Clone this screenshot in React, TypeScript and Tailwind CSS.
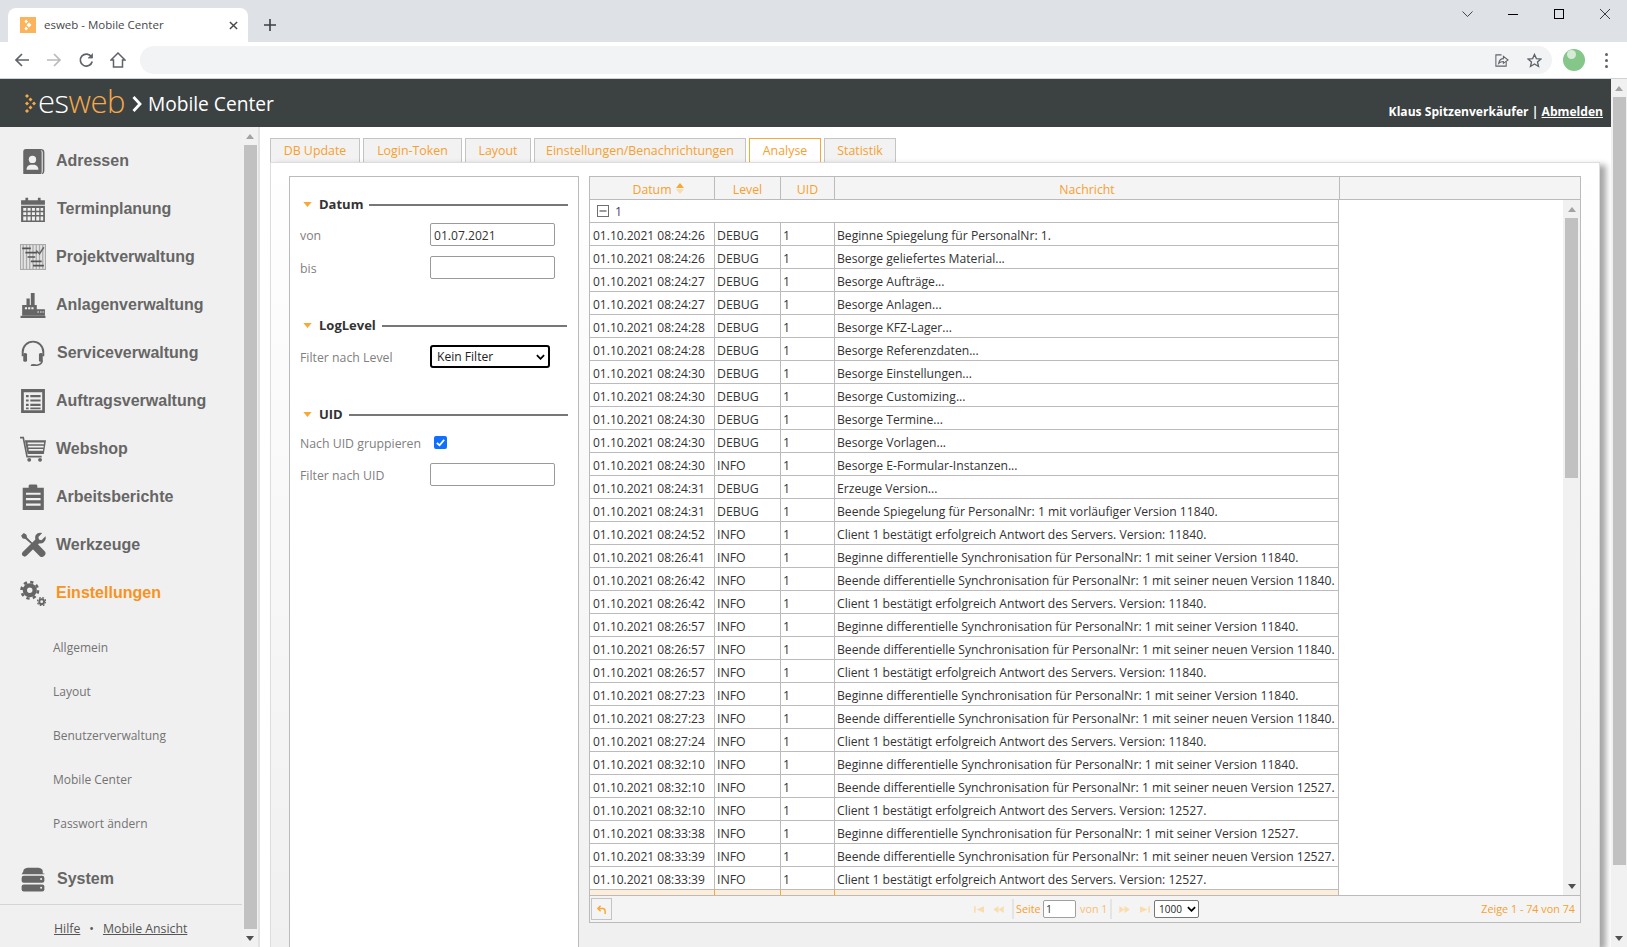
import React from "react";

const rows: [string, string, string][] = [
  ["01.10.2021 08:24:26", "DEBUG", "Beginne Spiegelung für PersonalNr: 1."],
  ["01.10.2021 08:24:26", "DEBUG", "Besorge geliefertes Material..."],
  ["01.10.2021 08:24:27", "DEBUG", "Besorge Aufträge..."],
  ["01.10.2021 08:24:27", "DEBUG", "Besorge Anlagen..."],
  ["01.10.2021 08:24:28", "DEBUG", "Besorge KFZ-Lager..."],
  ["01.10.2021 08:24:28", "DEBUG", "Besorge Referenzdaten..."],
  ["01.10.2021 08:24:30", "DEBUG", "Besorge Einstellungen..."],
  ["01.10.2021 08:24:30", "DEBUG", "Besorge Customizing..."],
  ["01.10.2021 08:24:30", "DEBUG", "Besorge Termine..."],
  ["01.10.2021 08:24:30", "DEBUG", "Besorge Vorlagen..."],
  ["01.10.2021 08:24:30", "INFO", "Besorge E-Formular-Instanzen..."],
  ["01.10.2021 08:24:31", "DEBUG", "Erzeuge Version..."],
  ["01.10.2021 08:24:31", "DEBUG", "Beende Spiegelung für PersonalNr: 1 mit vorläufiger Version 11840."],
  ["01.10.2021 08:24:52", "INFO", "Client 1 bestätigt erfolgreich Antwort des Servers. Version: 11840."],
  ["01.10.2021 08:26:41", "INFO", "Beginne differentielle Synchronisation für PersonalNr: 1 mit seiner Version 11840."],
  ["01.10.2021 08:26:42", "INFO", "Beende differentielle Synchronisation für PersonalNr: 1 mit seiner neuen Version 11840."],
  ["01.10.2021 08:26:42", "INFO", "Client 1 bestätigt erfolgreich Antwort des Servers. Version: 11840."],
  ["01.10.2021 08:26:57", "INFO", "Beginne differentielle Synchronisation für PersonalNr: 1 mit seiner Version 11840."],
  ["01.10.2021 08:26:57", "INFO", "Beende differentielle Synchronisation für PersonalNr: 1 mit seiner neuen Version 11840."],
  ["01.10.2021 08:26:57", "INFO", "Client 1 bestätigt erfolgreich Antwort des Servers. Version: 11840."],
  ["01.10.2021 08:27:23", "INFO", "Beginne differentielle Synchronisation für PersonalNr: 1 mit seiner Version 11840."],
  ["01.10.2021 08:27:23", "INFO", "Beende differentielle Synchronisation für PersonalNr: 1 mit seiner neuen Version 11840."],
  ["01.10.2021 08:27:24", "INFO", "Client 1 bestätigt erfolgreich Antwort des Servers. Version: 11840."],
  ["01.10.2021 08:32:10", "INFO", "Beginne differentielle Synchronisation für PersonalNr: 1 mit seiner Version 11840."],
  ["01.10.2021 08:32:10", "INFO", "Beende differentielle Synchronisation für PersonalNr: 1 mit seiner neuen Version 12527."],
  ["01.10.2021 08:32:10", "INFO", "Client 1 bestätigt erfolgreich Antwort des Servers. Version: 12527."],
  ["01.10.2021 08:33:38", "INFO", "Beginne differentielle Synchronisation für PersonalNr: 1 mit seiner Version 12527."],
  ["01.10.2021 08:33:39", "INFO", "Beende differentielle Synchronisation für PersonalNr: 1 mit seiner neuen Version 12527."],
  ["01.10.2021 08:33:39", "INFO", "Client 1 bestätigt erfolgreich Antwort des Servers. Version: 12527."],
];

const tabs = [
  { label: "DB Update", w: "w-[90px]" },
  { label: "Login-Token", w: "w-[99px]" },
  { label: "Layout", w: "w-[66px]" },
  { label: "Einstellungen/Benachrichtungen", w: "w-[212px]" },
  { label: "Analyse", w: "w-[72px]", active: true },
  { label: "Statistik", w: "w-[72px]" },
];

const G = "#666666";

function Ico({ children, view = "0 0 24 24" }: { children: React.ReactNode; view?: string }) {
  return (
    <svg viewBox={view} className="w-[26px] h-[26px]" fill={G}>
      {children}
    </svg>
  );
}

const icons: Record<string, React.ReactNode> = {
  Adressen: (
    <Ico>
      <path d="M3 3.5 Q3 1 5.5 1 H19 Q22.5 1 22.5 4 V21 Q22.5 24.5 19 24.5 H19 Q21 24 21 21 V4 Q21 2 19 2 Q20 3 20 4 V22 Q20 25 17 25 H5 Q3 25 3 23 Z" />
      <circle cx="11.5" cy="10.5" r="3.4" fill="#f0f0f0" />
      <path d="M6 20 Q6 16.5 9.5 15.5 L13.5 15.5 Q17 16.5 17 20 Z" fill="#f0f0f0" />
    </Ico>
  ),
  Terminplanung: (
    <Ico>
      <path d="M1 4 H5 V1.5 H7.5 V4 H16.5 V1.5 H19 V4 H23 V8 H1 Z" />
      <path fillRule="evenodd" d="M1 9 H23 V25 H1 Z M3 11 V13.5 H5.8 V11 Z M7 11 V13.5 H9.8 V11 Z M11 11 V13.5 H13.8 V11 Z M15 11 V13.5 H17.8 V11 Z M19 11 V13.5 H21.4 V11 Z M3 15 V17.5 H5.8 V15 Z M7 15 V17.5 H9.8 V15 Z M11 15 V17.5 H13.8 V15 Z M15 15 V17.5 H17.8 V15 Z M19 15 V17.5 H21.4 V15 Z M3 19 V22.5 H5.8 V19 Z M7 19 V22.5 H9.8 V19 Z M11 19 V22.5 H13.8 V19 Z M15 19 V22.5 H17.8 V19 Z M19 19 V22.5 H21.4 V19 Z" />
    </Ico>
  ),
  Projektverwaltung: (
    <Ico>
      <rect x="0.5" y="0.5" width="23" height="23" fill="#e4e4e4" stroke="#aaa" />
      <path d="M3 1 V23 M6 1 V23 M9 1 V23 M12 1 V23 M15 1 V23 M18 1 V23 M21 1 V23" stroke="#aaa" strokeWidth="1.2" />
      <path d="M2 4 H10 M5 8 H16 M7 12 H14 M10 16 H20 M12 20 H22" stroke="#555" strokeWidth="1.6" />
      <path d="M15 6 L18 9 L22 3" stroke="#666" strokeWidth="1.4" fill="none" />
    </Ico>
  ),
  Anlagenverwaltung: (
    <Ico>
      <path d="M6 6 H9 V12 H6 Z M10 1 H13.5 V12 H10 Z" />
      <path fillRule="evenodd" d="M2 12 H15.5 V16 H23 V22 H2 Z M4.5 14 V16 H6.5 V14 Z M7.5 14 V16 H9.5 V14 Z M10.5 14 V16 H12.5 V14 Z M16 18 V19 H17.5 V18 Z M18.5 18 V19 H20 V18 Z M20.8 18 V19 H22 V18 Z" />
      <rect x="0.5" y="22" width="23" height="2" />
    </Ico>
  ),
  Serviceverwaltung: (
    <Ico>
      <path d="M2.5 15 V11 A9.5 9.5 0 0 1 21.5 11 V15" fill="none" stroke={G} strokeWidth="1.8" />
      <rect x="3" y="12" width="3.5" height="8" rx="1.4" />
      <rect x="17.5" y="12" width="3.5" height="8" rx="1.4" />
      <path d="M20.5 19 Q20 23 14 23.5" fill="none" stroke={G} strokeWidth="1.5" />
      <ellipse cx="12.5" cy="23.5" rx="2.6" ry="1.3" />
    </Ico>
  ),
  Auftragsverwaltung: (
    <Ico>
      <path fillRule="evenodd" d="M1 1 H23 V23 H1 Z M3.5 4 V20.5 H20.5 V4 Z" />
      <path d="M5.5 6.5 H8 V8.5 H5.5 Z M9.5 6.5 H19 V8.5 H9.5 Z M5.5 10.5 H8 V12.5 H5.5 Z M9.5 10.5 H19 V12.5 H9.5 Z M5.5 14.5 H8 V16.5 H5.5 Z M9.5 14.5 H19 V16.5 H9.5 Z M5.5 18 H8 V19.5 H5.5 Z M9.5 18 H19 V19.5 H9.5 Z" />
    </Ico>
  ),
  Webshop: (
    <Ico>
      <path d="M0 1.5 H3 L6.5 19 H20" fill="none" stroke={G} strokeWidth="1.5" />
      <path fillRule="evenodd" d="M4.5 4 H24 L22 16.5 H7 Z M7 6 V7.5 H22.2 V6 Z M7.5 9 V10.5 H21.8 V9 Z M8 12 V13.5 H21.3 V12 Z" />
      <circle cx="8.5" cy="22" r="1.8" />
      <circle cx="18.5" cy="22" r="1.8" />
    </Ico>
  ),
  Arbeitsberichte: (
    <Ico>
      <path fillRule="evenodd" d="M2.5 3.5 H8 V1.5 Q8 0.5 9.5 0.5 H14.5 Q16 0.5 16 1.5 V3.5 H22 V24.5 H2.5 Z M5.5 8 V10 H19 V8 Z M5.5 13 V15 H19 V13 Z M5.5 18 V20 H19 V18 Z" />
    </Ico>
  ),
  Werkzeuge: (
    <Ico>
      <path d="M1 3.5 L3.5 1 L6 2.5 L6.5 5 L13 11.5 L15 9.8 L23 18 Q24.5 20 22.5 22 Q20.5 24 18.5 22.5 L10.5 14.5 L12 12.5 L5 6.5 L2.5 6 Z" />
      <path d="M23.5 4 L19.8 7.5 L17.5 7 L17 4.5 L20.5 1 Q16 0 14.2 3.5 Q13.8 5.5 14.2 7 L2.5 18.5 Q1 20.5 2.5 22 Q4.5 23.5 6 22 L17.5 10.5 Q20 11 22 9.5 Q24.5 7.5 23.5 4 Z" />
    </Ico>
  ),
  Einstellungen: (
    <Ico>
      <g fill="none" stroke={G}>
        <circle cx="9" cy="9.5" r="4.5" strokeWidth="4" />
        <circle cx="9" cy="9.5" r="7.6" strokeWidth="2.4" strokeDasharray="3 3" />
        <circle cx="20" cy="20" r="2.2" strokeWidth="1.8" />
        <circle cx="20" cy="20" r="3.8" strokeWidth="1.2" strokeDasharray="1.6 1.4" />
      </g>
    </Ico>
  ),
  System: (
    <Ico>
      <path d="M3 5 Q3 2 7 1.5 H17 Q21 2 21 5 V7 H1.5 H22.5 V7.5 H1.5 Z" />
      <rect x="1.5" y="9" width="21" height="6.5" rx="2" />
      <rect x="1.5" y="17" width="21" height="6.5" rx="2" />
      <circle cx="19.5" cy="12" r="0.9" fill="#f0f0f0" />
      <circle cx="19.5" cy="20" r="0.9" fill="#f0f0f0" />
    </Ico>
  ),
};

const navTop = [
  "Adressen",
  "Terminplanung",
  "Projektverwaltung",
  "Anlagenverwaltung",
  "Serviceverwaltung",
  "Auftragsverwaltung",
  "Webshop",
  "Arbeitsberichte",
  "Werkzeuge",
  "Einstellungen",
];
const subNav = ["Allgemein", "Layout", "Benutzerverwaltung", "Mobile Center", "Passwort ändern"];
const wideGap = ["Terminplanung", "Serviceverwaltung", "System"];

function NavItem({ name }: { name: string }) {
  const active = name === "Einstellungen";
  return (
    <div className={`h-[48px] flex items-center pl-[20px] ${wideGap.includes(name) ? "gap-[11px]" : "gap-[10px]"}`}>
      {icons[name]}
      <span
        className={`font-['Liberation_Sans',sans-serif] font-bold text-[16px] ${
          active ? "text-[#f7931e]" : "text-[#666666]"
        }`}
      >
        {name}
      </span>
    </div>
  );
}

function Tri({ up, color = "#666666" }: { up?: boolean; color?: string }) {
  return (
    <svg viewBox="0 0 10 6" className="w-[8px] h-[5px]" fill={color}>
      <path d={up ? "M5 0 L10 6 H0 Z" : "M0 0 H10 L5 6 Z"} />
    </svg>
  );
}

function Scroll({ thumb, narrow }: { thumb: string; narrow?: boolean }) {
  return (
    <div className={`h-full flex flex-col items-center ${narrow ? "w-[16px]" : "w-[17px]"} bg-[#f1f1f1]`}>
      <div className="h-[18px] shrink-0 flex items-center justify-center">
        <Tri up color="#a3a3a3" />
      </div>
      <div className="flex-1 w-[13px]">
        <div className={`bg-[#c1c1c1] w-[13px] ${thumb}`} />
      </div>
      <div className="h-[18px] shrink-0 flex items-center justify-center">
        <Tri color="#505050" />
      </div>
    </div>
  );
}

function Legend({ title, line }: { title: string; line: string }) {
  return (
    <div className="flex items-center h-[20px] pl-[13px]">
      <svg viewBox="0 0 10 6" className="w-[9px] h-[5px] mr-[7px]" fill="#f7a935">
        <path d="M0 0 H10 L5 6 Z" />
      </svg>
      <span className="pt-[2px] font-bold text-[13px] text-[#333333]">{title}</span>
      <div className={`h-[1.5px] bg-[#777777] ml-[6px] mt-[2px] ${line}`} />
    </div>
  );
}

function Field({ label, children }: { label: string; children: React.ReactNode }) {
  return (
    <div className="flex items-center h-[23px] pl-[10px]">
      <span className="w-[130px] pt-[3px] text-[12.3px] text-[#808080]">{label}</span>
      {children}
    </div>
  );
}

function TextBox({ value = "" }: { value?: string }) {
  return (
    <div className="w-[125px] h-[23px] border border-[#9a9a9a] rounded-[2px] bg-white pl-[3px] pt-[2px] text-[12.1px] leading-[20px] text-[#333333]">
      {value}
    </div>
  );
}

function PagerIcon({ d, w = "w-[10px]" }: { d: string; w?: string }) {
  return (
    <svg viewBox="0 0 12 8" className={`${w} h-[7px] shrink-0`} fill="#fbdcae">
      <path d={d} />
    </svg>
  );
}

export default function App() {
  return (
    <div className="w-[1627px] h-[947px] overflow-hidden flex flex-col bg-white font-['Open_Sans',sans-serif]">
      {/* browser tab strip */}
      <div className="h-[42px] shrink-0 bg-[#dee1e6] flex items-end relative">
        <div className="ml-[8px] w-[240px] h-[34px] bg-white rounded-t-[8px] flex items-center pl-[12px] pr-[10px]">
          <svg viewBox="0 0 16 16" className="w-[16px] h-[16px] shrink-0">
            <rect width="16" height="16" fill="#fbb45c" />
            <path d="M6 2.5 L8 4.5 L6 6.5 L4.5 4.5 Z M9 5.5 L11.5 8 L9 10.5 L6.5 8 Z M6 9.5 L8 11.5 L6 13.5 L4.5 11.5 Z" fill="#fff" />
          </svg>
          <span className="ml-[8px] flex-1 text-[11.5px] text-[#45484c]">esweb - Mobile Center</span>
          <svg viewBox="0 0 10 10" className="w-[9px] h-[9px]" stroke="#45484c" strokeWidth="1.6">
            <path d="M1 1 L9 9 M9 1 L1 9" />
          </svg>
        </div>
        <div className="ml-[16px] mb-[11px]">
          <svg viewBox="0 0 12 12" className="w-[12px] h-[12px]" stroke="#3c4043" strokeWidth="1.6">
            <path d="M6 0 V12 M0 6 H12" />
          </svg>
        </div>
        <div className="ml-auto self-start h-[28px] flex items-center">
          <div className="w-[46px] flex justify-center">
            <svg viewBox="0 0 11 6" className="w-[11px] h-[6px]" fill="none" stroke="#333" strokeWidth="0.9">
              <path d="M0.5 0.5 L5.5 5.5 L10.5 0.5" />
            </svg>
          </div>
          <div className="w-[46px] flex justify-center">
            <div className="w-[10px] h-px bg-black" />
          </div>
          <div className="w-[46px] flex justify-center">
            <div className="w-[10px] h-[10px] border border-black" />
          </div>
          <div className="w-[45px] flex justify-center">
            <svg viewBox="0 0 10 10" className="w-[10px] h-[10px]" stroke="#111" strokeWidth="0.8">
              <path d="M0 0 L10 10 M10 0 L0 10" />
            </svg>
          </div>
        </div>
      </div>

      {/* browser toolbar */}
      <div className="h-[37px] shrink-0 bg-white border-b border-[#cfd1d4] flex items-center">
        <div className="w-[140px] flex items-center pl-[14px] gap-[16px]">
          <svg viewBox="0 0 16 16" className="w-[16px] h-[16px]" fill="none" stroke="#5f6368" strokeWidth="1.7">
            <path d="M15 8 H2 M8 2 L2 8 L8 14" />
          </svg>
          <svg viewBox="0 0 16 16" className="w-[16px] h-[16px]" fill="none" stroke="#b8babd" strokeWidth="1.7">
            <path d="M1 8 H14 M8 2 L14 8 L8 14" />
          </svg>
          <svg viewBox="0 0 16 16" className="w-[16px] h-[16px]" fill="none" stroke="#5f6368" strokeWidth="1.7">
            <path d="M13.5 5 A6 6 0 1 0 14.2 9.5" />
            <path d="M14.5 1.5 V6 H10" fill="#5f6368" strokeWidth="0.8" />
          </svg>
          <svg viewBox="0 0 16 16" className="w-[16px] h-[16px]" fill="none" stroke="#5f6368" strokeWidth="1.5">
            <path d="M1 8 L8 1 L15 8 H12.5 V15 H3.5 V8 Z" />
          </svg>
        </div>
        <div className="w-[1412px] h-[28px] rounded-full bg-[#f1f3f4] flex items-center justify-end pr-[10px] gap-[18px]">
          <svg viewBox="0 0 16 16" className="w-[15px] h-[15px]" fill="none" stroke="#5f6368" strokeWidth="1.1">
            <path d="M8 2 H2 V14 H13 V9" />
            <path d="M5 11 Q6 6 10 6 V3.5 L15 7.5 L10 11 V9 Q7 9 5 11 Z" />
          </svg>
          <svg viewBox="0 0 16 16" className="w-[15px] h-[15px]" fill="none" stroke="#5f6368" strokeWidth="1.4">
            <path d="M8 1.5 L10 6 L14.8 6.4 L11.2 9.6 L12.3 14.4 L8 11.8 L3.7 14.4 L4.8 9.6 L1.2 6.4 L6 6 Z" />
          </svg>
        </div>
        <div className="ml-[11px] w-[22px] h-[22px] rounded-full bg-[#85c689] relative shrink-0">
          <div className="absolute left-[4px] top-[1px] w-[9px] h-[9px] rounded-full bg-[#d6ebd7]" />
        </div>
        <div className="ml-[20px] flex flex-col gap-[3px]">
          <div className="w-[3px] h-[3px] rounded-full bg-[#5f6368]" />
          <div className="w-[3px] h-[3px] rounded-full bg-[#5f6368]" />
          <div className="w-[3px] h-[3px] rounded-full bg-[#5f6368]" />
        </div>
      </div>

      {/* page */}
      <div className="flex-1 min-h-0 flex">
        <div className="w-[1611px] flex flex-col">
          <header className="h-[48px] shrink-0 bg-[#3c4142] flex pl-[25px] pr-[8px] text-white">
            <svg viewBox="0 0 11 19" className="w-[11px] h-[19px] mt-[15px] shrink-0" fill="#f5a94a">
              <path d="M2 0 L4 2 L2 4 L0 2 Z M2 15 L4 17 L2 19 L0 17 Z M2 7.5 L4 9.5 L2 11.5 L0 9.5 Z M5.5 3.5 L7.5 5.5 L5.5 7.5 L3.5 5.5 Z M5.5 11.5 L7.5 13.5 L5.5 15.5 L3.5 13.5 Z M9 7.5 L11 9.5 L9 11.5 L7 9.5 Z" />
            </svg>
            <div className="ml-[2px] h-[44px] flex items-center font-light text-[31px] leading-none tracking-[-0.5px]">
              <span className="text-white">es</span>
              <span className="text-[#f5a94a]">web</span>
            </div>
            <svg viewBox="0 0 10 16" className="w-[10px] h-[16px] ml-[7px] mt-[17px] shrink-0" fill="none" stroke="#fff" strokeWidth="2.8">
              <path d="M1.5 1 L8 8 L1.5 15" />
            </svg>
            <span className="ml-[6px] mt-[10px] text-[19.2px] leading-[30px] text-white">Mobile Center</span>
            <div className="ml-auto self-end mb-[6px] text-[12.1px] font-bold leading-[18px]">
              Klaus Spitzenverkäufer | <span className="underline">Abmelden</span>
            </div>
          </header>

          <div className="flex-1 min-h-0 flex">
            {/* sidebar */}
            <aside className="w-[260px] shrink-0 bg-[#f0f0f0] border-r-2 border-[#e2e2e2] flex">
              <div className="w-[242px] flex flex-col pt-[10px]">
                {navTop.map((n) => (
                  <NavItem key={n} name={n} />
                ))}
                <div className="flex flex-col pt-[9px] pb-[9px]">
                  {subNav.map((s) => (
                    <div key={s} className="h-[44px] flex items-center pl-[53px] text-[12px] text-[#737373]">
                      {s}
                    </div>
                  ))}
                </div>
                <NavItem name="System" />
                <div className="h-px bg-[#d4d4d4] mt-[1px] w-[242px]" />
                <div className="pl-[54px] pt-[15px] text-[12.3px] text-[#555555] flex items-center">
                  <span className="underline">Hilfe</span>
                  <span className="mx-[9px]">•</span>
                  <span className="underline">Mobile Ansicht</span>
                </div>
              </div>
              <Scroll thumb="h-[784px]" narrow />
            </aside>

            {/* content */}
            <main className="flex-1 min-w-0 pl-[10px] pr-[11px] pt-[11px] flex flex-col">
              <div className="flex h-[24px] shrink-0 gap-[3px]">
                {tabs.map((t) => (
                  <div
                    key={t.label}
                    className={`${t.w} flex items-center justify-center pt-[2px] border border-b-0 text-[12.4px] text-[#f7a02e] ${
                      t.active ? "bg-white border-[#f7a935]" : "bg-[#f2f2f2] border-[#c4c4c4]"
                    }`}
                  >
                    {t.label}
                  </div>
                ))}
              </div>
              <div className="flex-1 min-h-0 flex gap-[10px] border border-b-0 border-[#dddddd] bg-gradient-to-b from-white to-[#f0f0f0] pl-[18px] pr-[19px] pt-[13px] shadow-[6px_3px_6px_rgba(0,0,0,0.35)]">
                {/* filter box */}
                <div className="w-[290px] shrink-0 border border-[#bbbbbb] border-b-0 bg-white pt-[17px] pr-[10px]">
                  <Legend title="Datum" line="w-[199px]" />
                  <div className="mt-[9px]">
                    <Field label="von">
                      <TextBox value="01.07.2021" />
                    </Field>
                  </div>
                  <div className="mt-[10px]">
                    <Field label="bis">
                      <TextBox />
                    </Field>
                  </div>
                  <div className="mt-[36px]">
                    <Legend title="LogLevel" line="w-[185px]" />
                  </div>
                  <div className="mt-[10px]">
                    <Field label="Filter nach Level">
                      <div className="w-[120px] h-[23px] border-2 border-black rounded-[3px] bg-white flex items-center justify-between pl-[5px] pr-[3px] text-[12.1px] text-[#222222]">
                        <span className="pt-[2px]">Kein Filter</span>
                        <svg viewBox="0 0 10 6" className="w-[9px] h-[6px]" fill="none" stroke="#000" strokeWidth="2">
                          <path d="M1 1 L5 5 L9 1" />
                        </svg>
                      </div>
                    </Field>
                  </div>
                  <div className="mt-[36px]">
                    <Legend title="UID" line="w-[220px]" />
                  </div>
                  <div className="mt-[7px]">
                    <Field label="Nach UID gruppieren">
                      <div className="w-[13px] h-[13px] ml-[4px] rounded-[2px] bg-[#0f6fff] flex items-center justify-center">
                        <svg viewBox="0 0 12 12" className="w-[11px] h-[11px]" fill="none" stroke="#fff" strokeWidth="2">
                          <path d="M2 6.5 L5 9 L10 3" />
                        </svg>
                      </div>
                    </Field>
                  </div>
                  <div className="mt-[9px]">
                    <Field label="Filter nach UID">
                      <TextBox />
                    </Field>
                  </div>
                </div>

                {/* grid */}
                <div className="w-[992px] h-[747px] shrink-0 border border-[#bbbbbb] flex flex-col text-[12.3px] text-[#333333]">
                  <div className="h-[23px] shrink-0 bg-[#f4f4f4] border-b border-[#bbbbbb] grid grid-cols-[124px_66px_54px_505px_1fr] text-[#f7a02e]">
                    <div className="flex items-center justify-center gap-[4px] pl-[12px]">
                      <span className="pt-[4px]">Datum</span>
                      <div className="flex flex-col gap-px">
                        <Tri up color="#f7a935" />
                        <Tri color="#fbdcae" />
                      </div>
                    </div>
                    <div className="border-l border-[#bbbbbb] flex items-center justify-center pt-[4px]">Level</div>
                    <div className="border-l border-[#bbbbbb] flex items-center justify-center pt-[4px]">UID</div>
                    <div className="border-l border-[#bbbbbb] flex items-center justify-center pt-[4px]">Nachricht</div>
                    <div className="border-l border-[#bbbbbb]" />
                  </div>
                  <div className="flex-1 min-h-0 flex bg-white">
                    <div className="w-[749px] shrink-0 h-full overflow-hidden border-r border-[#bbbbbb]">
                      <div className="h-[23px] border-b border-[#bbbbbb] flex items-center pl-[7px] text-[#4a3a7a]">
                        <svg viewBox="0 0 12 12" className="w-[12px] h-[12px] mr-[6px]" fill="none" stroke="#707070">
                          <rect x="0.5" y="0.5" width="11" height="11" />
                          <path d="M2.5 6 H9.5" strokeWidth="1.4" />
                        </svg>
                        <span className="pt-[3px]">1</span>
                      </div>
                      {rows.map((r, i) => (
                        <div
                          key={i}
                          className="h-[23px] border-b border-[#bbbbbb] grid grid-cols-[124px_66px_54px_1fr] whitespace-nowrap"
                        >
                          <div className="pl-[3px] pt-[4px] leading-[18px] text-[12px]">{r[0]}</div>
                          <div className="border-l border-[#bbbbbb] pl-[2px] pt-[4px] leading-[18px]">{r[1]}</div>
                          <div className="border-l border-[#bbbbbb] pl-[2px] pt-[4px] leading-[18px]">1</div>
                          <div className="border-l border-[#bbbbbb] pl-[2px] pt-[4px] leading-[18px] text-[12.15px]">{r[2]}</div>
                        </div>
                      ))}
                      <div className="h-[8px] bg-[#fdeedc] grid grid-cols-[124px_66px_54px_1fr]">
                        <div />
                        <div className="border-l border-[#f7a935]" />
                        <div className="border-l border-[#f7a935]" />
                        <div className="border-l border-[#f7a935]" />
                      </div>
                    </div>
                    <div className="flex-1 flex justify-end">
                      <Scroll thumb="h-[260px]" />
                    </div>
                  </div>
                  <div className="h-[27px] shrink-0 bg-[#f4f4f4] border-t border-[#bbbbbb] flex items-center pl-[1px] pr-[5px] text-[#f7a02e] text-[10.8px]">
                    <div className="w-[21px] h-[22px] shrink-0 border border-[#c4c4c4] flex items-center justify-center">
                      <svg viewBox="0 0 12 12" className="w-[11px] h-[11px]" fill="none" stroke="#f7a935" strokeWidth="1.6">
                        <path d="M5 2 L2 5 L5 8 M2 5 H7 Q10 5 10 8 V11" />
                      </svg>
                    </div>
                    <div className="ml-[362px]">
                      <PagerIcon d="M0 0 H2 V8 H0 Z M12 0 V8 L3 4 Z" />
                    </div>
                    <div className="ml-[9px]">
                      <PagerIcon d="M6 0 V8 L0 4 Z M12 0 V8 L6 4 Z" w="w-[11px]" />
                    </div>
                    <div className="w-[2px] h-[20px] bg-[#e4e4e4] ml-[8px] shrink-0" />
                    <span className="w-[27px] ml-[2px]">Seite</span>
                    <div className="w-[33px] h-[18px] border border-[#a0a0a0] rounded-[2px] bg-white text-[#333333] text-[10.5px] leading-[16px] pl-[2px]">
                      1
                    </div>
                    <span className="w-[30px] ml-[4px] text-[#f9bd72]">von 1</span>
                    <div className="w-[2px] h-[20px] bg-[#e4e4e4] shrink-0" />
                    <div className="ml-[7px]">
                      <PagerIcon d="M0 0 V8 L6 4 Z M6 0 V8 L12 4 Z" w="w-[11px]" />
                    </div>
                    <div className="ml-[10px]">
                      <PagerIcon d="M0 0 V8 L9 4 Z M10 0 H12 V8 H10 Z" />
                    </div>
                    <div className="ml-[4px] w-[45px] h-[18px] border border-[#777777] rounded-[2px] bg-white flex items-center justify-between pl-[4px] pr-[2px] text-[10px] text-[#222222]">
                      1000
                      <svg viewBox="0 0 10 6" className="w-[9px] h-[6px]" fill="none" stroke="#000" strokeWidth="2">
                        <path d="M1 1 L5 5 L9 1" />
                      </svg>
                    </div>
                    <span className="ml-auto">Zeige 1 - 74 von 74</span>
                  </div>
                </div>
              </div>
            </main>
          </div>
        </div>
        <Scroll thumb="h-[768px]" narrow />
      </div>
    </div>
  );
}
